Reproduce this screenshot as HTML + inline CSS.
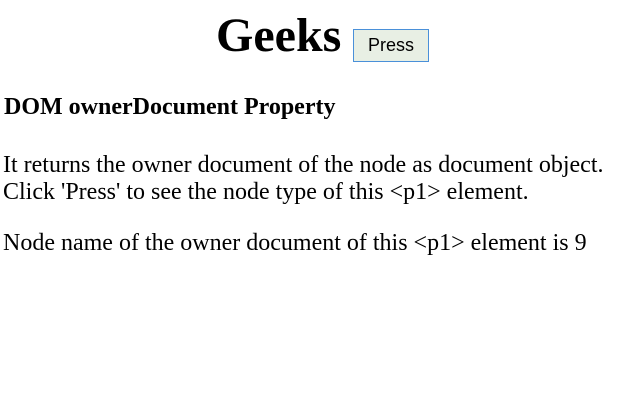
<!DOCTYPE html>
<html><head><style>
body{margin:0;width:638px;height:413px;background:#fff;font-family:"Liberation Serif",serif;color:#000;position:relative;overflow:hidden}
.a{position:absolute;white-space:nowrap;line-height:1}
h1{position:absolute;margin:0;left:216px;top:12px;font-size:48px;line-height:48px;font-weight:bold}
button{position:absolute;left:353px;top:29px;width:76px;height:33px;background:#e8efe4;border:1px solid #4a90d9;font-family:"Liberation Sans",sans-serif;font-size:18px;padding:0;color:#000}
</style></head><body>
<h1>Geeks</h1>
<button>Press</button>
<div class="a" style="left:4px;top:95px;font-size:24px;font-weight:bold">DOM ownerDocument Property</div>
<div class="a" style="left:3px;top:153px;font-size:24px">It returns the owner document of the node as document object.</div>
<div class="a" style="left:3px;top:180px;font-size:24px">Click 'Press' to see the node type of this &lt;p1&gt; element.</div>
<div class="a" style="left:3px;top:231px;font-size:24px">Node name of the owner document of this &lt;p1&gt; element is 9</div>
</body></html>
